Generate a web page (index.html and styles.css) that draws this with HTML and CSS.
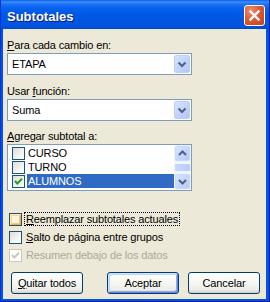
FILE: index.html
```html
<!DOCTYPE html>
<html lang="es">
<head>
  <meta charset="UTF-8">
  <title>Subtotales</title>
  <link rel="stylesheet" href="styles.css">
</head>
<body>
  <div class="window">
    <div class="titlebar">
      <span class="title">Subtotales</span>
      <span class="close">
        <svg width="21" height="21" viewBox="0 0 21 21"><path d="M6.5 6.5 L14.5 14.5 M14.5 6.5 L6.5 14.5" stroke="#fff" stroke-width="2.4" stroke-linecap="square"/></svg>
      </span>
    </div>

    <div class="client">
      <label class="field-label"><u>P</u>ara cada cambio en:</label>
      <div class="combo">
        <span class="combo-value">ETAPA</span>
        <span class="drop-btn">
          <svg width="16" height="18" viewBox="0 0 16 18"><path d="M4.5 7.5 L8 11 L11.5 7.5" fill="none" stroke="#4D6185" stroke-width="2"/></svg>
        </span>
      </div>

      <label class="field-label second">Usar <u>f</u>unción:</label>
      <div class="combo">
        <span class="combo-value">Suma</span>
        <span class="drop-btn">
          <svg width="16" height="18" viewBox="0 0 16 18"><path d="M4.5 7.5 L8 11 L11.5 7.5" fill="none" stroke="#4D6185" stroke-width="2"/></svg>
        </span>
      </div>

      <label class="field-label third"><u>A</u>gregar subtotal a:</label>
      <div class="listbox">
        <div class="list-items">
          <div class="list-row"><span class="chk"></span><span class="item-text">CURSO</span></div>
          <div class="list-row"><span class="chk"></span><span class="item-text">TURNO</span></div>
          <div class="list-row">
            <span class="chk">
              <svg width="11" height="11" viewBox="0 0 11 11"><path d="M2 5 L4.3 7.5 L9 2.8" fill="none" stroke="#21A121" stroke-width="2"/></svg>
            </span>
            <span class="item-text selected">ALUMNOS</span>
          </div>
        </div>
        <div class="scrollbar">
          <span class="sb-btn">
            <svg width="15" height="15" viewBox="0 0 15 15"><path d="M4 9 L7.5 5.5 L11 9" fill="none" stroke="#4D6185" stroke-width="2"/></svg>
          </span>
          <span class="sb-track"><span class="sb-thumb"></span></span>
          <span class="sb-btn">
            <svg width="15" height="15" viewBox="0 0 15 15"><path d="M4 6 L7.5 9.5 L11 6" fill="none" stroke="#4D6185" stroke-width="2"/></svg>
          </span>
        </div>
      </div>

      <div class="options">
        <div class="opt"><span class="chk hot"></span><span class="opt-text focused"><u>R</u>eemplazar subtotales actuales</span></div>
        <div class="opt"><span class="chk"></span><span class="opt-text"><u>S</u>alto de página entre grupos</span></div>
        <div class="opt disabled">
          <span class="chk">
            <svg width="11" height="11" viewBox="0 0 11 11"><path d="M2 5 L4.3 7.5 L9 2.8" fill="none" stroke="#CAC8BB" stroke-width="2"/></svg>
          </span>
          <span class="opt-text">Resumen debajo de los datos</span>
        </div>
      </div>

      <div class="buttons">
        <button class="btn"><u>Q</u>uitar todos</button>
        <button class="btn default">Aceptar</button>
        <button class="btn">Cancelar</button>
      </div>
    </div>
  </div>
</body>
</html>
```

FILE: styles.css
```css
body {
  margin: 0;
  font-family: "Liberation Sans", Arial, sans-serif;
  font-size: 11px;
  letter-spacing: -0.15px;
  color: #000;
}
.window {
  width: 270px;
  height: 302px;
  background: #0054E3;
  display: flex;
  flex-direction: column;
  box-sizing: border-box;
  border-left: 1px solid #0831D9;
  border-right: 1px solid #001EA0;
  border-bottom: 1px solid #001EA0;
}
.titlebar {
  height: 29px;
  flex: none;
  display: flex;
  align-items: flex-start;
  padding: 0 4px 0 6px;
  background: linear-gradient(to bottom, #0A5FE8 0, #3D8DF9 2px, #1E74F4 4px, #0562EE 8px, #0058E6 50%, #0055E0 85%, #004BD5 100%);
}
.title {
  flex: 1;
  color: #fff;
  font-weight: bold;
  font-size: 13px;
  line-height: 15px;
  letter-spacing: 0;
  padding-top: 9px;
  text-shadow: 1px 1px 0 #0A1883;
}
.close {
  width: 21px;
  height: 21px;
  margin-top: 5px;
  box-sizing: border-box;
  border: 1px solid #fff;
  border-radius: 3px;
  background: radial-gradient(circle at 30% 25%, #EE8E6E 0, #DD5B36 45%, #C63E17 100%);
  display: flex;
}
.close svg {
  margin: -1px;
}
.client {
  flex: 1;
  margin: 0 3px 2px 2px;
  background: #ECE9D8;
  padding: 9px 6px 0 4px;
  display: flex;
  flex-direction: column;
}
.field-label {
  display: block;
  line-height: 15px;
}
.field-label.second {
  margin-top: 9px;
}
.field-label.third {
  margin-top: 8px;
}
.combo {
  width: 185px;
  height: 22px;
  box-sizing: border-box;
  border: 1px solid #7F9DB9;
  background: #fff;
  display: flex;
  align-items: center;
}
.combo-value {
  flex: 1;
  padding-left: 4px;
}
.drop-btn {
  width: 16px;
  height: 18px;
  margin: 1px;
  box-sizing: border-box;
  border: 1px solid #BCCFF8;
  border-radius: 2px;
  background: linear-gradient(135deg, #D7E3FE 0, #C3D4FB 50%, #B2C6F6 100%);
  display: flex;
}
.drop-btn svg {
  margin: -1px;
}
.listbox {
  width: 185px;
  height: 47px;
  box-sizing: border-box;
  border: 1px solid #7F9DB9;
  background: #fff;
  display: flex;
}
.list-items {
  flex: 1;
  padding-top: 1px;
}
.list-row {
  height: 14px;
  display: flex;
  align-items: center;
}
.list-row .chk {
  margin-left: 4px;
}
.item-text {
  flex: 1;
  margin-left: 2px;
  padding-left: 1px;
  line-height: 14px;
}
.item-text.selected {
  background: #316AC5;
  color: #fff;
}
.chk {
  width: 13px;
  height: 13px;
  flex: none;
  box-sizing: border-box;
  border: 1px solid #1C5180;
  background: linear-gradient(135deg, #DCDCD7 0, #F4F4F1 60%, #FFFFFF 100%);
  display: flex;
}
.chk.hot {
  background: #F6F5EC;
  box-shadow: inset 1px 1px 0 #FFE7B0, inset -1px -1px 0 #F5AE3A, inset 2px 2px 0 #FCD891, inset -2px -2px 0 #F9C566;
}
.scrollbar {
  width: 17px;
  flex: none;
  display: flex;
  flex-direction: column;
  background: #F7F6F1;
}
.sb-btn {
  height: 17px;
  flex: none;
  box-sizing: border-box;
  border: 1px solid #EEF2FD;
  border-radius: 3px;
  background: linear-gradient(135deg, #DCE6FE 0, #C6D6FB 50%, #B4C8F6 100%);
  box-shadow: inset 0 0 0 1px #C9D8FC;
  display: flex;
}
.sb-track {
  flex: 1;
  display: flex;
  padding: 1px 0;
}
.sb-thumb {
  flex: 1;
  box-sizing: border-box;
  border: 1px solid #EEF2FD;
  border-radius: 2px;
  background: linear-gradient(to right, #CAD8FC, #B9CBF7);
}
.options {
  margin-top: 19px;
}
.opt {
  height: 18px;
  display: flex;
  align-items: center;
}
.opt .chk {
  margin-left: 2px;
}
.opt-text {
  margin-left: 2px;
  padding: 0 1px;
  line-height: 12px;
  border: 1px dotted transparent;
}
.opt-text.focused {
  border-color: #000;
}
.opt.disabled .chk {
  border-color: #CAC8BB;
  background: #fff;
}
.opt.disabled .opt-text {
  color: #ACA899;
}
.buttons {
  margin-top: 8px;
  display: flex;
  padding: 0 0 0 4px;
}
.btn {
  width: 72px;
  height: 22px;
  box-sizing: border-box;
  border: 1px solid #003C74;
  border-radius: 3px;
  background: linear-gradient(to bottom, #FFFFFF 0, #F4F4F0 60%, #ECEBE6 85%, #D6D0C5 100%);
  font-family: "Liberation Sans", Arial, sans-serif;
  font-size: 11px;
  letter-spacing: -0.15px;
  color: #000;
  padding: 0;
}
.btn.default {
  margin-left: auto;
  margin-right: 9px;
  box-shadow: inset 1px 1px 0 #CEE7FF, inset -1px -1px 0 #6982EE, inset 2px 2px 0 #BCD4F6, inset -2px -2px 0 #89ADE4;
}
```
